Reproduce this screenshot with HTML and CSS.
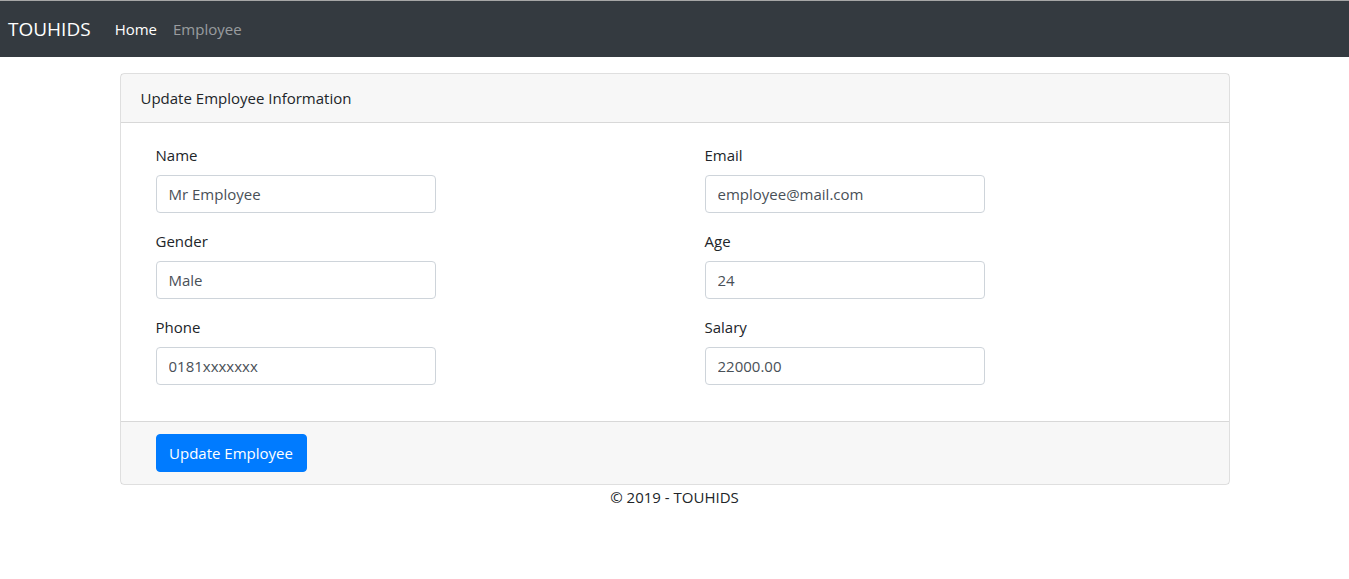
FILE: index.html
```html
<!DOCTYPE html>
<html lang="en">
<head>
<meta charset="utf-8">
<title>Update Employee - TOUHIDS</title>
<link rel="stylesheet" href="styles.css">
</head>
<body>
<nav class="navbar">
  <a class="brand" href="#">TOUHIDS</a>
  <ul class="nav">
    <li><a class="nav-link active" href="#">Home</a></li>
    <li><a class="nav-link" href="#">Employee</a></li>
  </ul>
</nav>
<main class="container">
  <form class="card">
    <div class="card-header">Update Employee Information</div>
    <div class="card-body">
      <div class="grid">
        <div class="group">
          <label>Name</label>
          <input class="control" type="text" value="Mr Employee">
        </div>
        <div class="group">
          <label>Email</label>
          <input class="control" type="text" value="employee@mail.com">
        </div>
        <div class="group">
          <label>Gender</label>
          <input class="control" type="text" value="Male">
        </div>
        <div class="group">
          <label>Age</label>
          <input class="control" type="text" value="24">
        </div>
        <div class="group">
          <label>Phone</label>
          <input class="control" type="text" value="0181xxxxxxx">
        </div>
        <div class="group">
          <label>Salary</label>
          <input class="control" type="text" value="22000.00">
        </div>
      </div>
    </div>
    <div class="card-footer">
      <button class="btn" type="button">Update Employee</button>
    </div>
  </form>
  <footer class="footer">&copy; 2019 - TOUHIDS</footer>
</main>
</body>
</html>
```
FILE: styles.css
```css
* { box-sizing: border-box; }
html, body { margin: 0; padding: 0; }
body {
  font-family: "Open Sans", "Noto Sans", sans-serif;
  font-size: 15px;
  line-height: 24px;
  color: #212529;
  background: #fff;
  border-top: 1px solid #a6a6a6;
}
.navbar {
  background: #343a40;
  height: 56px;
  display: flex;
  align-items: center;
  padding: 0 8px;
}
.brand {
  color: #fff;
  text-decoration: none;
  font-size: 19px;
  line-height: 30px;
  margin-right: 16px;
}
.nav {
  list-style: none;
  display: flex;
  margin: 0;
  padding: 0;
}
.nav-link {
  display: block;
  padding: 8px;
  color: rgba(255,255,255,.5);
  text-decoration: none;
}
.nav-link.active { color: #fff; }
.container {
  width: 1110px;
  margin: 16px auto 0;
}
.card {
  display: block;
  border: 1px solid rgba(0,0,0,.125);
  border-radius: 4px;
  margin: 0;
}
.card-header {
  background: rgba(0,0,0,.03);
  border-bottom: 1px solid rgba(0,0,0,.125);
  padding: 12px 20px;
}
.card-body {
  padding: 20px 20px 20px 35px;
}
.grid {
  display: grid;
  grid-template-columns: 549px 549px;
}
.group {
  display: flex;
  flex-direction: column;
  align-items: flex-start;
  margin-bottom: 16px;
}
.group label {
  margin-bottom: 8px;
}
.control {
  width: 280px;
  height: 38px;
  padding: 6px 12px;
  font: inherit;
  color: #495057;
  background: #fff;
  border: 1px solid #ced4da;
  border-radius: 4px;
}
.card-footer {
  background: rgba(0,0,0,.03);
  border-top: 1px solid rgba(0,0,0,.125);
  padding: 12px 35px;
}
.btn {
  font: inherit;
  color: #fff;
  background: #007bff;
  border: 1px solid #007bff;
  border-radius: 4px;
  padding: 6px 12px;
  height: 38px;
  width: 151px;
  cursor: pointer;
}
.footer {
  text-align: center;
}
```
